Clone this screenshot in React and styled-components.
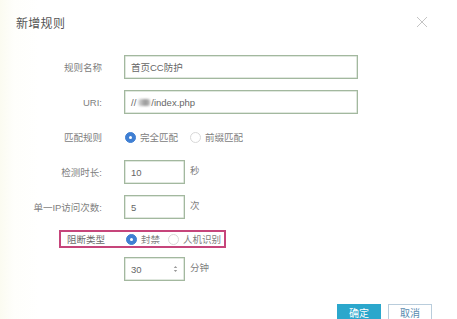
import React from 'react';
import styled, { createGlobalStyle } from 'styled-components';

const GlobalStyle = createGlobalStyle`
	html, body {
		margin: 0;
		padding: 0;
		background: #fff;
		overflow: hidden;
	}
	body {
		font-family: "Liberation Sans", "Noto Sans CJK SC", sans-serif;
	}
`;

const Dialog = styled.div`
	width: 457px;
	height: 319px;
	background: linear-gradient(90deg, #fbfbf1 0px, #fefefb 14px, #fff 40px);
	color: #666;
	overflow: hidden;
`;

const Header = styled.div`
	display: flex;
	align-items: center;
	justify-content: space-between;
	height: 44px;
	padding: 0 29px 0 16px;
`;

const Title = styled.div`
	font-size: 12px;
	color: #555;
	letter-spacing: 0.3px;
`;

const Close = styled.svg`
	width: 12px;
	height: 12px;
`;

const Form = styled.div`
	display: flex;
	flex-direction: column;
	gap: 11px;
	margin-top: 11px;
`;

const Row = styled.div`
	display: flex;
	align-items: center;
	height: ${(p) => p.h || 24}px;
	margin-top: ${(p) => p.mt || 0}px;
`;

const Label = styled.div`
	width: 102px;
	text-align: right;
	font-size: 9.5px;
	color: #808080;
	flex-shrink: 0;
	white-space: nowrap;
`;

const Field = styled.div`
	display: flex;
	align-items: center;
	margin-left: 22px;
	gap: 5px;
`;

const Input = styled.div`
	box-sizing: border-box;
	width: ${(p) => p.w}px;
	height: 24px;
	border: 1px solid #a3b89f;
	box-shadow: inset 0 0 0 0.5px #c2d2bf;
	background: #fff;
	display: flex;
	align-items: center;
	justify-content: space-between;
	padding: 0 6px;
	font-size: 9.5px;
	color: #666;
`;

const Unit = styled.span`
	font-size: 9.5px;
	color: #808080;
	margin-top: -4px;
`;

const RadioGroup = styled.div`
	display: flex;
	align-items: center;
	gap: 4px;
	font-size: 9.5px;
	color: #808080;
	white-space: nowrap;
`;

const Radio = styled.span`
	box-sizing: border-box;
	flex-shrink: 0;
	width: 11px;
	height: 11px;
	border-radius: 50%;
	margin-left: ${(p) => p.ml || 0}px;
	background: ${(p) => (p.checked ? '#3f7fd3' : '#fff')};
	border: 1px solid ${(p) => (p.checked ? '#3f7fd3' : '#d8d8d8')};
	display: flex;
	align-items: center;
	justify-content: center;
	&::after {
		content: '';
		width: 3px;
		height: 3px;
		border-radius: 50%;
		background: ${(p) => (p.checked ? '#fff' : 'transparent')};
	}
`;

const Highlight = styled.div`
	display: flex;
	align-items: center;
	box-sizing: border-box;
	height: 18px;
	margin-left: 59px;
	padding-right: 3px;
	border: 2px solid #c6457b;
	${Label} {
		width: 38px;
		text-align: left;
		margin-left: 6px;
		color: #6a6a6a;
	}
	${RadioGroup} {
		margin-left: 21px;
	}
`;

const Blur = styled.span`
	display: inline-block;
	width: 12px;
	height: 7px;
	margin: 0 1px 0 2px;
	background: linear-gradient(90deg, #ddd, #999 60%, #bbb);
	filter: blur(1px);
	border-radius: 2px;
`;

const Footer = styled.div`
	display: flex;
	justify-content: flex-end;
	gap: 7px;
	padding-right: 25px;
	margin-top: 23px;
`;

const Button = styled.div`
	box-sizing: border-box;
	width: 44px;
	height: 26px;
	display: flex;
	justify-content: center;
	font-size: 10px;
	line-height: 10px;
	background: ${(p) => (p.primary ? '#2ba7cc' : '#fff')};
	color: ${(p) => (p.primary ? '#fff' : '#5a8bb0')};
	border: 1px solid ${(p) => (p.primary ? '#2ba7cc' : '#b9cddc')};
	padding-top: 4px;
`;

const Spinner = () => (
	<svg width="5" height="8" viewBox="0 0 5 8">
		<path d="M0.8 3 L2.5 1 L4.2 3 Z" fill="#999" />
		<path d="M0.8 5 L2.5 7 L4.2 5 Z" fill="#999" />
	</svg>
);

const App = () => {
	return (
		<Dialog>
			<GlobalStyle />
			<Header>
				<Title>新增规则</Title>
				<Close viewBox="0 0 12 12">
					<path d="M1 1 L11 11 M11 1 L1 11" stroke="#c4c4c4" strokeWidth="1" />
				</Close>
			</Header>
			<Form>
				<Row>
					<Label>规则名称</Label>
					<Field>
						<Input w={234}>首页CC防护</Input>
					</Field>
				</Row>
				<Row>
					<Label>URI:</Label>
					<Field>
						<Input w={234}>
							<span>
								//
								<Blur />
								/index.php
							</span>
						</Input>
					</Field>
				</Row>
				<Row>
					<Label>匹配规则</Label>
					<Field>
						<RadioGroup>
							<Radio checked ml={1} />
							<span>完全匹配</span>
							<Radio ml={8} />
							<span>前缀匹配</span>
						</RadioGroup>
					</Field>
				</Row>
				<Row>
					<Label>检测时长:</Label>
					<Field>
						<Input w={61}>10</Input>
						<Unit>秒</Unit>
					</Field>
				</Row>
				<Row>
					<Label>单一IP访问次数:</Label>
					<Field>
						<Input w={61}>5</Input>
						<Unit>次</Unit>
					</Field>
				</Row>
				<Row h={18}>
					<Highlight>
						<Label>阻断类型</Label>
						<RadioGroup>
							<Radio checked />
							<span>封禁</span>
							<Radio ml={4} />
							<span>人机识别</span>
						</RadioGroup>
					</Highlight>
				</Row>
				<Row mt={-2}>
					<Label />
					<Field>
						<Input w={61}>
							<span>30</span>
							<Spinner />
						</Input>
						<Unit>分钟</Unit>
					</Field>
				</Row>
			</Form>
			<Footer>
				<Button primary>确定</Button>
				<Button>取消</Button>
			</Footer>
		</Dialog>
	);
};

export default App;
